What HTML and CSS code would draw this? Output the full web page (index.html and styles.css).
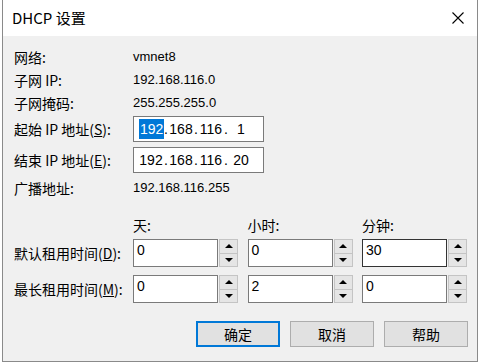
FILE: index.html
```html
<!DOCTYPE html>
<html lang="zh-CN">
<head>
  <meta charset="UTF-8">
  <title>DHCP 设置</title>
  <link rel="stylesheet" href="styles.css">
</head>
<body>

  <div class="dialog">
    <div class="titlebar">
      <span class="title">DHCP 设置</span>
      <svg class="close" width="12" height="12" viewBox="0 0 12 12">
        <path d="M0.5 0.5 L11.5 11.5 M11.5 0.5 L0.5 11.5" stroke="#000" stroke-width="1.1" fill="none"/>
      </svg>
    </div>

    <div class="content">
      <div class="row info">
        <span class="label">网络:</span>
        <span class="value">vmnet8</span>
      </div>
      <div class="row info">
        <span class="label">子网 IP:</span>
        <span class="value">192.168.116.0</span>
      </div>
      <div class="row info">
        <span class="label">子网掩码:</span>
        <span class="value">255.255.255.0</span>
      </div>

      <div class="row ip-row first">
        <span class="label">起始 IP 地址(<u>S</u>):</span>
        <div class="ip-box">
          <span class="field"><span class="selected">192</span></span><span class="dot">.</span>
          <span class="field">168</span><span class="dot">.</span>
          <span class="field">116</span><span class="dot">.</span>
          <span class="field">1</span>
        </div>
      </div>
      <div class="row ip-row">
        <span class="label">结束 IP 地址(<u>E</u>):</span>
        <div class="ip-box">
          <span class="field">192</span><span class="dot">.</span>
          <span class="field">168</span><span class="dot">.</span>
          <span class="field">116</span><span class="dot">.</span>
          <span class="field">20</span>
        </div>
      </div>

      <div class="row info broadcast">
        <span class="label">广播地址:</span>
        <span class="value">192.168.116.255</span>
      </div>

      <div class="lease">
        <span></span>
        <span class="col-head">天:</span>
        <span class="col-head">小时:</span>
        <span class="col-head">分钟:</span>

        <span class="lease-label">默认租用时间(<u>D</u>):</span>
        <div class="spin"><div class="spin-input">0</div><div class="spin-btns"><span class="up"></span><span class="down"></span></div></div>
        <div class="spin"><div class="spin-input">0</div><div class="spin-btns"><span class="up"></span><span class="down"></span></div></div>
        <div class="spin"><div class="spin-input focus">30</div><div class="spin-btns"><span class="up"></span><span class="down"></span></div></div>

        <span class="lease-label">最长租用时间(<u>M</u>):</span>
        <div class="spin"><div class="spin-input">0</div><div class="spin-btns"><span class="up"></span><span class="down"></span></div></div>
        <div class="spin"><div class="spin-input">2</div><div class="spin-btns"><span class="up"></span><span class="down"></span></div></div>
        <div class="spin"><div class="spin-input">0</div><div class="spin-btns"><span class="up"></span><span class="down"></span></div></div>
      </div>

      <div class="buttons">
        <button class="btn default">确定</button>
        <button class="btn">取消</button>
        <button class="btn">帮助</button>
      </div>
    </div>
  </div>

</body>
</html>
```

FILE: styles.css
```css
body {
  margin: 0;
  background-color: #ffffff;
  font-family: 'Noto Sans CJK SC', sans-serif;
  color: #000;
}

.dialog {
  margin-left: 2px;
  width: 474px;
  height: 361px;
  border: 1px solid #8a8a8a;
  border-top: none;
  background-color: #f0f0f0;
}

.titlebar {
  height: 36px;
  background-color: #ffffff;
  display: flex;
  align-items: center;
  justify-content: space-between;
  padding: 0 13px 0 9px;
}

.title {
  font-size: 15px;
  margin-top: -2px;
}

.close {
  margin-top: -1px;
}

.content {
  padding: 11px 0 0 11px;
}

.row {
  display: flex;
  align-items: center;
}

.label {
  font-size: 14px;
  line-height: 20px;
  width: 119px;
  flex-shrink: 0;
}

.value {
  font-family: 'Liberation Sans', 'Noto Sans CJK SC', sans-serif;
  font-size: 13px;
  line-height: 20px;
}

.info {
  height: 20px;
  margin-bottom: 3px;
}

.ip-row {
  height: 26px;
  margin-bottom: 5px;
}

.ip-row.first {
  margin-top: 3px;
}

.ip-box {
  width: 124px;
  height: 24px;
  border: 1px solid #7a7a7a;
  background-color: #fff;
  display: flex;
  align-items: center;
  padding-left: 5px;
  font-family: 'Liberation Sans', sans-serif;
  font-size: 14px;
}

.field {
  width: 24px;
  text-align: center;
}

.dot {
  width: 6px;
  text-align: center;
}

.selected {
  background-color: #0078d7;
  color: #fff;
  padding: 2px 1px;
}

.broadcast {
  margin-top: 5px;
}

.lease {
  display: grid;
  grid-template-columns: 109.5px 105px 105px 105px;
  grid-template-rows: 24px 36px 28px;
  column-gap: 9.5px;
  align-items: start;
  margin-top: 17px;
}

.col-head {
  font-size: 14px;
  line-height: 20px;
}

.lease-label {
  font-size: 14px;
  line-height: 28px;
  white-space: nowrap;
}

.spin {
  display: flex;
  height: 28px;
}

.spin-input {
  flex: 1;
  border: 1px solid #7a7a7a;
  background-color: #fff;
  font-family: 'Liberation Sans', sans-serif;
  font-size: 14px;
  padding: 1px 0 0 3px;
  line-height: 18px;
}

.spin-input.focus {
  border-color: #333;
}

.spin-btns {
  width: 19px;
  margin-left: 1px;
  display: flex;
  flex-direction: column;
}

.spin-btns span {
  flex: 1;
  background-color: #e5e5e5;
  border: 1px solid #c4c4c4;
  display: flex;
  align-items: center;
  justify-content: center;
}

.spin-btns span + span {
  border-top: none;
}

.up::before {
  content: '';
  border-left: 4px solid transparent;
  border-right: 4px solid transparent;
  border-bottom: 4px solid #000;
}

.down::before {
  content: '';
  border-left: 4px solid transparent;
  border-right: 4px solid transparent;
  border-top: 4px solid #000;
}

.buttons {
  display: flex;
  gap: 10px;
  margin: 18px 0 0 182px;
}

.btn {
  width: 84px;
  height: 26px;
  background-color: #e1e1e1;
  border: 1px solid #adadad;
  font-family: 'Noto Sans CJK SC', sans-serif;
  font-size: 14px;
  padding: 0;
}

.btn.default {
  border: 2px solid #0078d7;
}
```
